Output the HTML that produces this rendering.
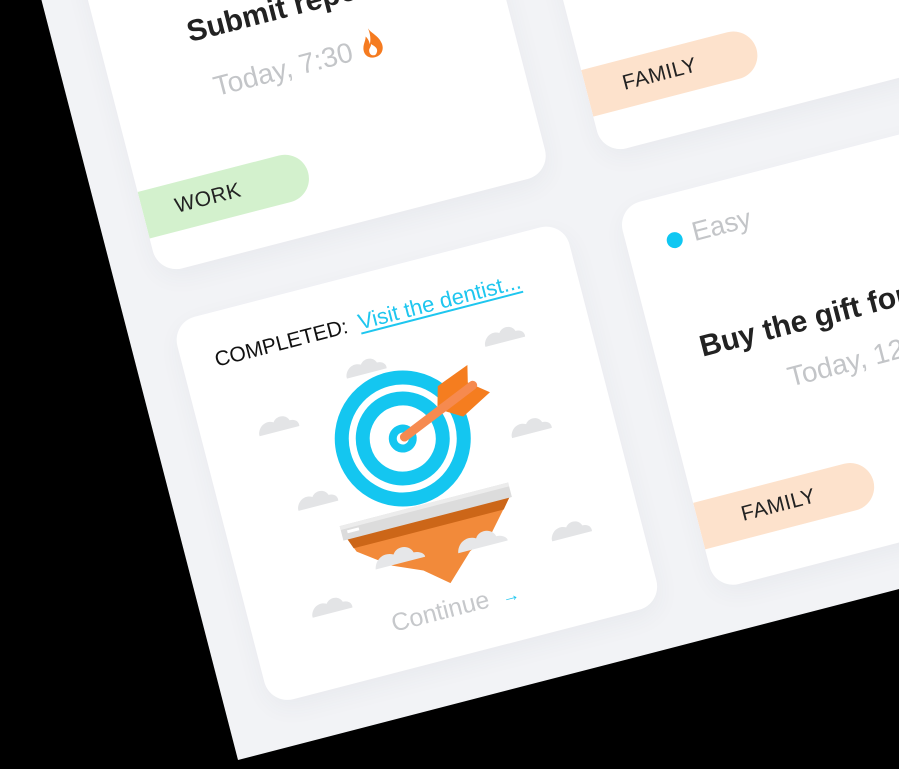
<!DOCTYPE html>
<html><head><meta charset="utf-8"><style>
html,body{margin:0;padding:0;width:899px;height:769px;overflow:hidden;background:#000;}
*{box-sizing:border-box;}
#f{position:absolute;left:0;top:0;transform:translate(238px,760px) rotate(-14.5deg);transform-origin:0 0;font-family:"Liberation Sans",Arial,sans-serif;}
.panel{position:absolute;left:0;top:-1300px;width:1200px;height:1300px;background:#f2f3f6;}
.card{position:absolute;width:405px;height:395px;background:#fff;border-radius:24px;overflow:hidden;box-shadow:0 8px 24px rgba(60,70,90,0.05);}
.pill{position:absolute;left:0;height:48px;border-radius:0 24px 24px 0;font-size:21px;color:#222;line-height:48px;letter-spacing:0.5px;}
.title{position:absolute;left:0;width:100%;text-align:center;font-weight:bold;font-size:30px;color:#222;white-space:nowrap;}
.sub{position:absolute;left:0;width:100%;text-align:center;font-size:28px;color:#c3c5c8;white-space:nowrap;}
</style></head><body>
<div id="f">
<div class="panel"></div>

<!-- top-left card -->
<div class="card" style="left:45px;top:-885px;">
  <div class="title" style="top:152px;left:-16px;">Submit report</div>
  <div class="sub" style="top:208px;left:-14px;">Today, 7:30 <svg width="26" height="32" viewBox="0 0 24 30" style="vertical-align:-3px"><path d="M12 1C14 7 20 10 21 18C22 25 17 29 12 29C6 29 2 25 3 19C4 14 7 12 8 8C10 11 10 14 10 16C12 12 13 7 12 1Z" fill="#f57b20"/><path d="M12 27C9 27 7 25 8 21C9 19 11 18 11 16C14 19 16 21 15 24C14 26 13 27 12 27Z" fill="#fff"/></svg></div>
  <div class="pill" style="top:310px;width:170px;background:#d3f1cd;padding-left:33px;">WORK</div>
</div>

<!-- top-right card -->
<div class="card" style="left:505px;top:-890px;">
  <div class="pill" style="top:308px;width:175px;background:#fde2cc;padding-left:37px;">FAMILY</div>
</div>

<!-- completed card -->
<div class="card" style="left:45px;top:-440px;">
  <div style="position:absolute;left:33px;top:34px;font-size:21px;color:#111;white-space:nowrap;">COMPLETED:&nbsp; <span style="color:#1ec6ef;font-size:22px;text-decoration:underline;text-underline-offset:3px;">Visit the dentist...</span></div>
  <svg width="405" height="395" style="position:absolute;left:0;top:0" viewBox="0 0 405 395">
    <g fill="#e3e4e6">
      <path d="M298 100c2-8 10-12 17-8c4-6 14-5 16 2c6 0 9 4 8 8h-41z"/>
      <path d="M156 96c2-8 10-12 17-8c4-6 14-5 16 2c6 0 9 4 8 8h-41z"/>
      <path d="M57 130c2-8 10-12 17-8c4-6 14-5 16 2c6 0 9 4 8 8h-41z"/>
      <path d="M301 195c2-8 10-12 17-8c4-6 14-5 16 2c6 0 9 4 8 8h-41z"/>
      <path d="M76 212c2-8 10-12 17-8c4-6 14-5 16 2c6 0 9 4 8 8h-41z"/>
      <path d="M314 305c2-8 10-12 17-8c4-6 14-5 16 2c6 0 9 4 8 8h-41z"/>
      <path d="M63 319c2-8 10-12 17-8c4-6 14-5 16 2c6 0 9 4 8 8h-41z"/>
    </g>
    <circle cx="195" cy="170" r="61" fill="none" stroke="#14c6f0" stroke-width="14"/>
    <circle cx="195" cy="170" r="40" fill="none" stroke="#14c6f0" stroke-width="14"/>
    <circle cx="195" cy="170" r="14" fill="#14c6f0"/>
    <circle cx="195" cy="170" r="6" fill="#fff"/>
    <path d="M242 128L276 115L272 132L291 147L259 164L236 150Z" fill="#f57d1f"/>
    <line x1="197" y1="169" x2="276" y2="136" stroke="#f68a4f" stroke-width="9" stroke-linecap="round"/>
    <path d="M116 253L284 253L258 283L232 296L205 322L182 303L152 290L122 268Z" fill="#f28a3a"/>
    <path d="M116 253L284 253L275 264L120 264Z" fill="#cc6618"/>
    <rect x="112" y="239" width="174" height="15" fill="#dcdcdc"/>
    <rect x="112" y="239" width="174" height="4" fill="#ececec"/>
    <rect x="118" y="245" width="12" height="3" fill="#fff"/>
    <g fill="#e6e7e9">
      <path d="M136 290c2-10 12-15 21-10c5-8 18-6 20 3c7 0 11 5 10 7z"/>
      <path d="M220 295c2-10 12-15 21-10c5-8 18-6 20 3c7 0 11 5 10 7z"/>
    </g>
  </svg>
  <div style="position:absolute;left:138px;top:333px;font-size:25px;color:#c6c8cb;white-space:nowrap;">Continue <span style="color:#1ec6ef;font-size:18px;margin-left:6px;">→</span></div>
</div>

<!-- right bottom card -->
<div class="card" style="left:505px;top:-440px;">
  <div style="position:absolute;left:40px;top:38px;width:16px;height:16px;border-radius:50%;background:#0fc7f2;"></div>
  <div style="position:absolute;left:67px;top:28px;font-size:27px;color:#c3c5c8;">Easy</div>
  <div class="title" style="top:140px;left:-10px;">Buy the gift for mom</div>
  <div class="sub" style="top:192px;">Today, 12:00</div>
  <div class="pill" style="top:305px;width:180px;background:#fde2cc;padding-left:44px;">FAMILY</div>
</div>
</div>
</body></html>
